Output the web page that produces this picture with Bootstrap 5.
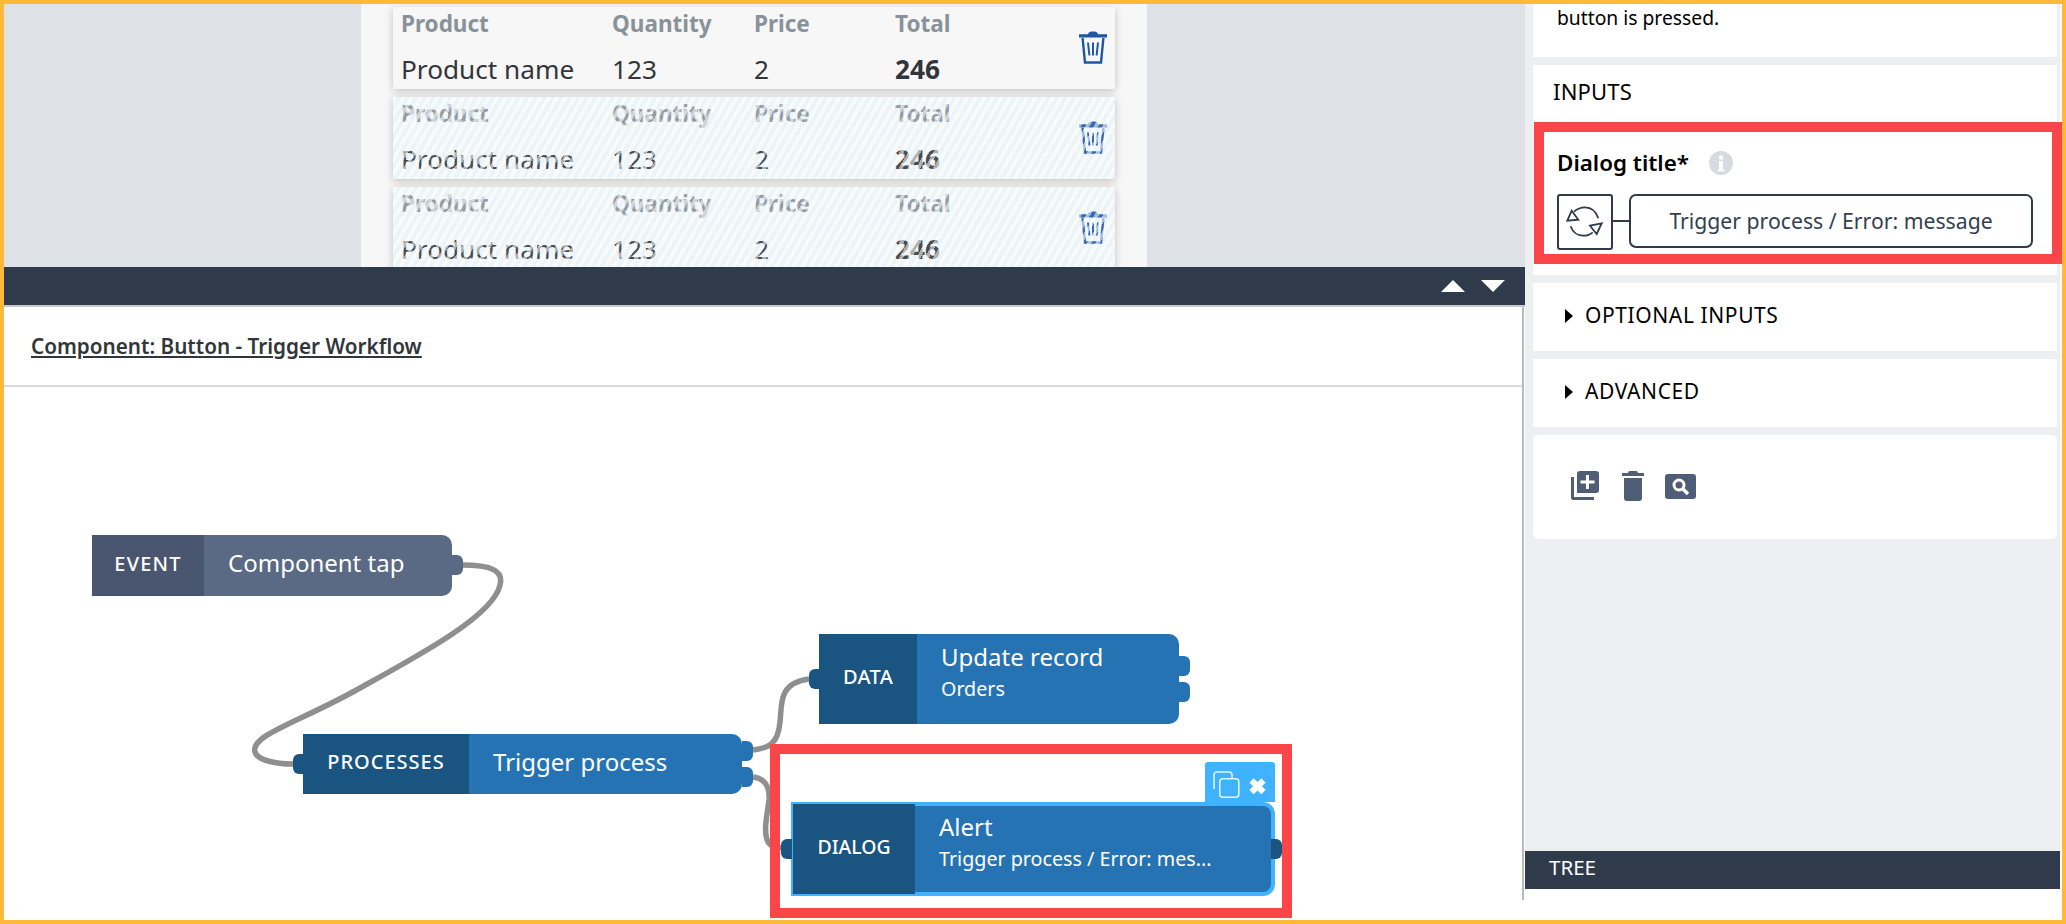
<!DOCTYPE html>
<html lang="en">
<head>
<meta charset="utf-8">
<title>Component: Button - Trigger Workflow</title>
<link href="https://cdn.jsdelivr.net/npm/bootstrap@5.3.0/dist/css/bootstrap.min.css" rel="stylesheet">
<style>
html,body{height:924px;overflow:hidden;background:#fff}
body{font-family:"Noto Sans","Open Sans",sans-serif;color:#000}
.shell{width:2066px;height:924px;border:solid #fdb937;border-width:4px;overflow:hidden;background:#fff}
.left-pane{width:1521px;flex:none}
.preview{height:263px;background:#dee1e5;overflow:hidden;flex:none}
.preview-sheet{width:786px;margin-left:357px;height:263px;background:#f7f7f7;padding:3px 32px 0;overflow:hidden}
.prod{height:82px;margin-bottom:8px;background:#f7f7f7;box-shadow:0 2px 8px rgba(0,0,0,.22);padding:3px 11px 0 8px;border:0;border-radius:0;position:relative;flex:none}
.prod.ghost{background:#edf4f8}
.prod.ghost::after{content:"";position:absolute;inset:0;background:repeating-linear-gradient(120deg,rgba(255,255,255,.6) 0 3.7px,rgba(237,244,248,.12) 3.7px 7.4px)}
.cells{display:grid;grid-template-columns:211px 142px 141px 1fr}
.cell-h{font-size:22.5px;font-weight:700;color:#89919a;height:27px;line-height:27px;white-space:nowrap}
.cell-v{font-size:26.2px;color:#32363a;line-height:36px;margin-top:14px;white-space:nowrap}
.bin{position:absolute;left:686px;top:24px;width:28px;height:33px;color:#1e56a8}
.dark-bar{height:40px;background:#2f3a4a;border-bottom:2px solid #c8c8c8;padding-right:20px;gap:16px;flex:none}
.lower{height:593px;border-right:2px solid #b9b9b9;flex:none;width:1520px}
.comp-head{height:80px;border-bottom:2px solid #d9d9dc;padding:1px 0 0 27px;font-size:20.7px;font-weight:600;color:#32363a;text-decoration:underline;flex:none}
.canvas{position:relative;flex:1 1 auto}
.wires{position:absolute;left:-4px;top:-387px;width:1520px;height:924px;pointer-events:none}
.node{position:absolute;display:flex;color:#fff;border-radius:0 10px 10px 0;background:#2673b3}
.node-h{background:#1a5480;display:flex;align-items:center;justify-content:center;font-size:20px;font-weight:500;flex:none;height:100%;padding-bottom:4px}
.node-b{padding-left:24px;padding-bottom:5px;display:flex;flex-direction:column;justify-content:center;white-space:nowrap}
.node-b.dual{padding-bottom:13px}
.n-title{font-size:24px;line-height:32px}
.n-sub{font-size:19.7px;line-height:32px}
.port{position:absolute;width:11px;height:20px;background:#1a5480}
.port.r{background:#2673b3;border-radius:0 6px 6px 0}
.port.l{border-radius:6px 0 0 6px}
.n-event{left:88px;top:148px;width:360px;height:61px;background:#5a6a84}
.n-event .node-h{width:112px;background:#4a5670;letter-spacing:1.200px;padding-bottom:3px}
.n-event .port.r{background:#5a6a84;left:360px;top:20px}
.n-proc{left:299px;top:347px;width:439px;height:60px}
.n-proc .node-h{width:166px;letter-spacing:1px}
.n-data{left:815px;top:247px;width:360px;height:90px}
.n-data .node-h{width:98px;letter-spacing:.3px;padding-bottom:5px}
.n-alert{left:787px;top:415px;width:484px;height:94px;border:4px solid #3fb3ff;border-radius:0 12px 12px 0;background:#2673b3}
.n-alert .node-h{width:122px;height:90px;margin:-2px 0 0 -2px;font-size:19.4px;padding-bottom:5px}
.n-alert .node-b{padding-left:24px}
.tools{position:absolute;left:1201px;top:375px;width:70px;height:40px;background:#3fb3ff;border-radius:3px 3px 0 0}
.flag{position:absolute;border:10px solid #fb4649;pointer-events:none}
.flag-a{left:766px;top:357px;width:522px;height:174px}
.right-pane{width:537px;flex:none;padding-right:2px;height:885px}
.side{background:#eeeff1;height:847px;padding:0 3px 0 8px;flex:none}
.pane-card{background:#fff;margin-bottom:8px;border:0;border-radius:0;position:relative}
.t-intro{height:53px;font-size:19.3px;padding:0 0 0 24px;line-height:27px;overflow:hidden}
.t-inputs{height:210px}
.inputs-h{font-size:22px;padding:13px 0 0 20px;line-height:26px;letter-spacing:.2px}
.field-h{font-size:22.4px;font-weight:600;padding-left:24px;margin-top:45px;height:28px}
.info{width:24px;height:24px;margin-left:20px}
.binding{margin:17px 0 0 24px;height:56px}
.bind-ico{width:56px;height:56px;border:2px solid #2f3a4a;border-radius:3px;flex:none;background:#fff}
.bind-line{width:16px;height:2px;background:#2f3a4a;margin-top:-2px;flex:none}
.bind-val{width:404px;height:54px;border:2px solid #2f3a4a;border-radius:7px;font-size:21.200px;color:#33404f;align-self:flex-start;line-height:1}
.t-acc{height:68px;padding-left:32px;padding-bottom:2px;font-size:21px;letter-spacing:.6px}
.caret{width:0;height:0;border-left:8px solid #000;border-top:7px solid transparent;border-bottom:7px solid transparent;margin-right:12px}
.t-actions{height:104px;border-radius:5px;padding-left:38px;padding-top:36px;gap:23px;color:#4f5d76}
.tree{background:#2f3a4a;height:38px;color:#fff;font-size:20.500px;padding:0 0 5px 24px;flex:none}
.flag-b{left:1px;top:57px;width:528px;height:142px}
</style>
</head>
<body>
<div class="shell d-flex">
  <div class="left-pane d-flex flex-column">
    <div class="preview">
      <div class="preview-sheet">
        <div class="prod card">
          <div class="cells"><span class="cell-h">Product</span><span class="cell-h">Quantity</span><span class="cell-h">Price</span><span class="cell-h">Total</span><span class="cell-v">Product name</span><span class="cell-v">123</span><span class="cell-v">2</span><span class="cell-v fw-bold">246</span></div>
          <svg class="bin" viewBox="0 0 28 33"><path fill="currentColor" d="M9 3.2C9.6 1 11.5 .6 14 .6s4.400 .4 5 2.600h9v3.300H0V3.200z"/><path fill="none" stroke="currentColor" stroke-width="2.400" d="M3.600 7l2.400 24.500h16L24.400 7"/><path stroke="currentColor" stroke-width="2" d="M9 11.500l1.400 13M14 11.500v13M19 11.500l-1.400 13"/></svg>
        </div>
        <div class="prod card ghost">
          <div class="cells"><span class="cell-h">Product</span><span class="cell-h">Quantity</span><span class="cell-h">Price</span><span class="cell-h">Total</span><span class="cell-v">Product name</span><span class="cell-v">123</span><span class="cell-v">2</span><span class="cell-v fw-bold">246</span></div>
          <svg class="bin" viewBox="0 0 28 33"><path fill="currentColor" d="M9 3.2C9.6 1 11.5 .6 14 .6s4.400 .4 5 2.600h9v3.300H0V3.200z"/><path fill="none" stroke="currentColor" stroke-width="2.400" d="M3.600 7l2.400 24.500h16L24.400 7"/><path stroke="currentColor" stroke-width="2" d="M9 11.500l1.400 13M14 11.500v13M19 11.500l-1.400 13"/></svg>
        </div>
        <div class="prod card ghost">
          <div class="cells"><span class="cell-h">Product</span><span class="cell-h">Quantity</span><span class="cell-h">Price</span><span class="cell-h">Total</span><span class="cell-v">Product name</span><span class="cell-v">123</span><span class="cell-v">2</span><span class="cell-v fw-bold">246</span></div>
          <svg class="bin" viewBox="0 0 28 33"><path fill="currentColor" d="M9 3.2C9.6 1 11.5 .6 14 .6s4.400 .4 5 2.600h9v3.300H0V3.200z"/><path fill="none" stroke="currentColor" stroke-width="2.400" d="M3.600 7l2.400 24.500h16L24.400 7"/><path stroke="currentColor" stroke-width="2" d="M9 11.500l1.400 13M14 11.500v13M19 11.500l-1.400 13"/></svg>
        </div>
      </div>
    </div>
    <div class="dark-bar d-flex align-items-center justify-content-end">
      <svg width="24" height="12" viewBox="0 0 24 12"><path fill="#fff" d="M12 0l12 12H0z"/></svg>
      <svg width="24" height="12" viewBox="0 0 24 12"><path fill="#fff" d="M0 0h24L12 12z"/></svg>
    </div>
    <div class="lower d-flex flex-column">
      <div class="comp-head d-flex align-items-center"><span>Component: Button - Trigger Workflow</span></div>
      <div class="canvas">
        <svg class="wires" viewBox="0 0 1520 924" fill="none" stroke="#8f8f8f" stroke-width="5.500">
          <path d="M462 565C490 565 504 570 500 585C494 615 420 655 360 688C300 722 250 735 255 752C257 760 275 764 293 764"/>
          <path d="M753 750C768 748 778 745 780 722C782 704 778 683 809 679"/>
          <path d="M753 777C764 778 770 786 769 800C767 815 763 832 768 842C771 847 776 848 783 848"/>
        </svg>
        <div class="node n-event"><div class="node-h">EVENT</div><div class="node-b"><span class="n-title">Component tap</span></div><i class="port r"></i></div>
        <div class="node n-proc"><div class="node-h">PROCESSES</div><div class="node-b"><span class="n-title">Trigger process</span></div><i class="port l" style="left:-10px;top:20px"></i><i class="port r" style="left:439px;top:7px"></i><i class="port r" style="left:439px;top:33px"></i></div>
        <div class="node n-data"><div class="node-h">DATA</div><div class="node-b dual"><span class="n-title">Update record</span><span class="n-sub">Orders</span></div><i class="port l" style="left:-10px;top:35px"></i><i class="port r" style="left:360px;top:22px"></i><i class="port r" style="left:360px;top:48px"></i></div>
        <div class="tools">
          <svg width="70" height="40" viewBox="0 0 70 40" fill="none" stroke="#dff3ff" stroke-width="1.600"><path d="M9 27V13a3 3 0 0 1 3-3h12a3 3 0 0 1 3 3v3"/><rect x="14.800" y="16.800" width="19" height="18.400" rx="3"/><path stroke="#fff" stroke-width="6" d="M46.500 18.500l12 11.500M58.500 18.500L46.500 30"/></svg>
        </div>
        <div class="node n-alert"><div class="node-h">DIALOG</div><div class="node-b dual"><span class="n-title">Alert</span><span class="n-sub">Trigger process / Error: mes...</span></div><i class="port l" style="left:-14px;top:33px"></i><i class="port r" style="left:476px;top:33px;background:#1a5480"></i></div>
        <div class="flag flag-a"></div>
      </div>
    </div>
  </div>
  <div class="right-pane d-flex flex-column">
    <div class="side d-flex flex-column">
      <div class="pane-card t-intro">button is pressed.</div>
      <div class="pane-card t-inputs">
        <div class="inputs-h">INPUTS</div>
        <div class="field-h d-flex align-items-center"><span>Dialog title*</span>
          <svg class="info" viewBox="0 0 24 24"><circle cx="12" cy="12" r="12" fill="#d8dae0"/><circle cx="12" cy="6.500" r="2.200" fill="#fff"/><path fill="#fff" d="M9.500 10h4.500v9h1.500v1.500h-7V19h1.500v-7.500H9.500z"/></svg></div>
        <div class="binding d-flex align-items-center">
          <div class="bind-ico d-flex align-items-center justify-content-center">
            <svg width="52" height="52" viewBox="2 2 52 52" fill="none" stroke="#2f3a4a" stroke-width="1.800"><path d="M17 17.700C20 15 24 13.300 28 13.300c6 0 11 4 13.300 11"/><path d="M13.700 32.300C15.500 38 20.500 41.700 26.300 41.700c3.500 0 7-1.200 9.400-3.400"/><path d="M10.300 26.700l4.400-10 6.600 9zM44.700 29.300L33 31.700l6.700 8.300z"/></svg>
          </div>
          <div class="bind-line"></div>
          <div class="bind-val d-flex align-items-center justify-content-center"><span>Trigger process / Error: message</span></div>
        </div>
        <div class="flag flag-b"></div>
      </div>
      <div class="pane-card t-acc d-flex align-items-center"><i class="caret"></i>OPTIONAL INPUTS</div>
      <div class="pane-card t-acc d-flex align-items-center"><i class="caret"></i>ADVANCED</div>
      <div class="pane-card t-actions d-flex align-items-start">
        <svg width="28" height="29" viewBox="0 0 28 29"><path fill="currentColor" d="M9 0h16a3 3 0 0 1 3 3v16a3 3 0 0 1-3 3H6V3a3 3 0 0 1 3-3z"/><path fill="currentColor" d="M0 6h3v20h20v3H2a2 2 0 0 1-2-2z"/><path stroke="#fff" stroke-width="3" d="M16.500 4v14M9.500 11h14"/></svg>
        <svg width="22" height="30" viewBox="0 0 22 30"><path fill="currentColor" d="M8 0h6a2 2 0 0 1 2 2h6v3H0V2h6a2 2 0 0 1 2-2zM2 7h18v20a3 3 0 0 1-3 3H5a3 3 0 0 1-3-3z"/></svg>
        <svg width="31" height="25" viewBox="0 0 31 25" style="margin-top:3px;margin-left:-2px"><rect width="31" height="25" rx="3" fill="currentColor"/><circle cx="14" cy="11" r="5" fill="none" stroke="#fff" stroke-width="3"/><path stroke="#fff" stroke-width="3.400" d="M18 15l5 5"/></svg>
      </div>
    </div>
    <div class="tree d-flex align-items-center">TREE</div>
  </div>
</div>
<script src="https://cdn.jsdelivr.net/npm/bootstrap@5.3.0/dist/js/bootstrap.bundle.min.js"></script>
</body>
</html>
